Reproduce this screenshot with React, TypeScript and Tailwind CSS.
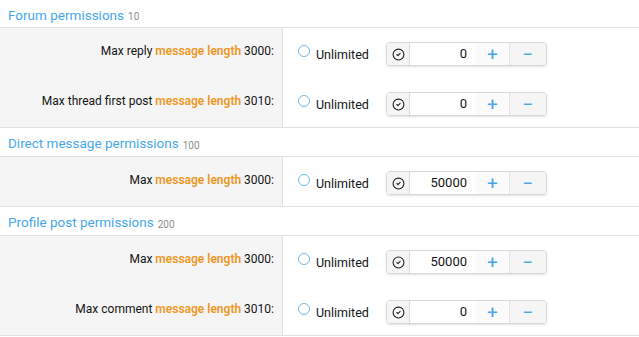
import { CircleCheck } from 'lucide-react';

type Row = { pre: string; post: string; value: string };
type Section = { title: string; count: string; rows: Row[] };

const SECTIONS: Section[] = [
  {
    title: 'Forum permissions',
    count: '10',
    rows: [
      { pre: 'Max reply', post: '3000:', value: '0' },
      { pre: 'Max thread first post', post: '3010:', value: '0' },
    ],
  },
  {
    title: 'Direct message permissions',
    count: '100',
    rows: [{ pre: 'Max', post: '3000:', value: '50000' }],
  },
  {
    title: 'Profile post permissions',
    count: '200',
    rows: [
      { pre: 'Max', post: '3000:', value: '50000' },
      { pre: 'Max comment', post: '3010:', value: '0' },
    ],
  },
];

function NumberBox({ value }: { value: string }) {
  return (
    <div className="flex h-[24px] w-[161px] mt-[1px] rounded-[4px] border border-[#d8d8d8] shadow-[0_1px_2px_rgba(0,0,0,0.12)] overflow-hidden">
      <div className="w-[23px] flex items-center justify-center bg-[#f5f5f5] border-r border-[#dcdcdc]">
        <CircleCheck size={13} strokeWidth={2} className="text-[#222]" />
      </div>
      <div className="w-[66px] bg-white flex items-center justify-end pr-[9px] text-[13px] text-[#141414]">
        {value}
      </div>
      <div className="w-[33px] bg-[#fbfbfb] flex items-center justify-center text-[#47a7eb] text-[19px] leading-none">
        +
      </div>
      <div className="flex-1 bg-[#f5f5f5] border-l border-[#e3e3e3] flex items-center justify-center text-[#47a7eb] text-[19px] leading-none">
        −
      </div>
    </div>
  );
}

function FormRow({ row, tall }: { row: Row; tall: boolean }) {
  return (
    <div className={`flex ${tall ? 'h-[50px]' : 'h-[49px]'}`}>
      <div className="w-[283px] shrink-0 bg-[#f5f5f5] border-r border-[#e0e0e0] pr-[8px] pt-[14px] text-right text-[12px] text-[#141414]">
        {row.pre} <span className="font-semibold text-[#f0961e]">message length</span> {row.post}
      </div>
      <div className="flex items-start pt-[13px] pl-[15px]">
        <div className="flex items-start gap-[6px] h-[24px] w-[88px] text-[12.5px] text-[#141414]">
          <span className="w-[12px] h-[12px] mt-[4px] rounded-full border-[1.5px] border-[#6fb6e8] bg-white" />
          <span className="mt-[5px]">Unlimited</span>
        </div>
        <NumberBox value={row.value} />
      </div>
    </div>
  );
}

export default function App() {
  return (
    <div className="w-[639px] h-[337px] overflow-hidden bg-white" style={{ fontFamily: 'Roboto, "Liberation Sans", Arial, sans-serif' }}>
      {SECTIONS.map((s, i) => (
        <div key={s.title}>
          <div className={`${i === 0 ? 'h-[28px]' : 'h-[29px]'} flex items-center pl-[8px] pt-[3px] border-b border-[#e0e0e0]`}>
            <span className="text-[13.5px] text-[#47a7eb]">{s.title}</span>
            <span className="ml-[4px] mt-[3px] text-[10px] text-[#8c8c8c]">{s.count}</span>
          </div>
          <div className="border-b border-[#e0e0e0]">
            {s.rows.map((r, j) => (
              <FormRow key={j} row={r} tall={s.rows.length > 1 && j === 0} />
            ))}
          </div>
        </div>
      ))}
    </div>
  );
}
